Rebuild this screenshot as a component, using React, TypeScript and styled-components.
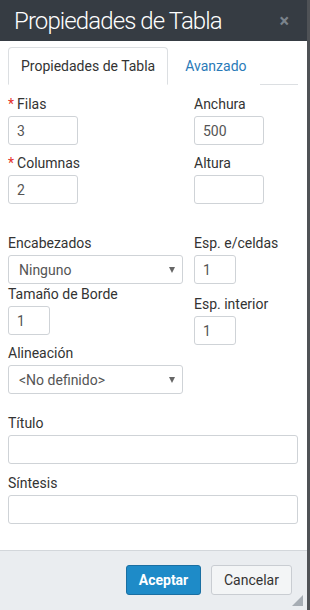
import React from 'react';
import styled, { createGlobalStyle } from 'styled-components';

const GlobalStyle = createGlobalStyle`
  html, body {
    margin: 0;
    padding: 0;
    background: #4f5256;
    font-family: Roboto, "Liberation Sans", Arial, sans-serif;
  }
  * {
    box-sizing: border-box;
  }
`;

const Dialog = styled.div`
  width: 307px;
  height: 610px;
  background: #fff;
  display: flex;
  flex-direction: column;
  position: relative;
`;

const Header = styled.div`
  height: 41px;
  background: #363c43;
  color: #fff;
  display: flex;
  align-items: center;
  justify-content: space-between;
  padding: 0 14px;
`;

const Title = styled.h1`
  margin: 0;
  font-size: 24px;
  font-weight: 300;
  letter-spacing: -0.9px;
  white-space: nowrap;
`;

const Close = styled.span`
  color: #7b838c;
  font-size: 18px;
  font-weight: 700;
  line-height: 1;
  margin-right: 4px;
`;

const Body = styled.div`
  flex: 1;
  padding: 6px 9px 0 8px;
`;

const Tabs = styled.div`
  display: flex;
  border-bottom: 1px solid #dcdfe2;
  height: 38px;
`;

const Tab = styled.div<{ $active?: boolean }>`
  display: flex;
  align-items: center;
  height: 38px;
  white-space: nowrap;
  font-size: 14px;
  color: ${p => (p.$active ? '#333' : '#2a7ab8')};
  background: #fff;
  border: 1px solid ${p => (p.$active ? '#dcdfe2' : 'transparent')};
  border-bottom-color: ${p => (p.$active ? '#fff' : 'transparent')};
  border-radius: 4px 4px 0 0;
  margin-bottom: -1px;
  padding: ${p => (p.$active ? '0 12px 0 12px' : '0 12px 0 16px')};
`;

const Row = styled.div<{ $mt: number }>`
  display: flex;
  margin-top: ${p => p.$mt}px;
`;

const Column = styled.div<{ $width?: number }>`
  display: flex;
  flex-direction: column;
  width: ${p => (p.$width ? `${p.$width}px` : 'auto')};
  flex: ${p => (p.$width ? 'none' : '1')};
`;

const Field = styled.div<{ $mt?: number }>`
  display: flex;
  flex-direction: column;
  margin-top: ${p => p.$mt || 0}px;
`;

const Label = styled.label`
  font-size: 14px;
  line-height: 18px;
  color: #333;
  margin-bottom: 3px;
`;

const Req = styled.span`
  color: #e5302a;
  margin-right: 3px;
`;

const Input = styled.div<{ $width: number; $height?: number }>`
  width: ${p => p.$width}px;
  height: ${p => p.$height || 29}px;
  border: 1px solid #cfd3d7;
  border-radius: 3px;
  font-size: 14px;
  color: #555;
  display: flex;
  align-items: center;
  padding-left: 8px;
`;

const Select = styled(Input)`
  justify-content: space-between;
  padding: 0 7px 0 10px;
`;

const Arrow = styled.span`
  width: 0;
  height: 0;
  border-left: 3.5px solid transparent;
  border-right: 3.5px solid transparent;
  border-top: 6px solid #666;
`;

const Footer = styled.div`
  height: 60px;
  background: #eaedf0;
  border-top: 1px solid #d3d7db;
  display: flex;
  justify-content: flex-end;
  align-items: flex-start;
  padding: 14px 15px 0 0;
  gap: 10px;
`;

const Button = styled.button<{ $primary?: boolean }>`
  height: 30px;
  border-radius: 3px;
  font-family: Roboto, "Liberation Sans", Arial, sans-serif;
  font-size: 14px;
  font-weight: ${p => (p.$primary ? 700 : 400)};
  color: ${p => (p.$primary ? '#fff' : '#333')};
  background: ${p => (p.$primary ? '#1e8bc8' : '#f3f5f6')};
  border: 1px solid ${p => (p.$primary ? '#1a6fa2' : '#c9cdd2')};
  padding: 0;
  width: ${p => (p.$primary ? '75px' : '81px')};
`;

const Grip = styled.div`
  position: absolute;
  right: 4px;
  bottom: 4px;
  width: 0;
  height: 0;
  border-left: 11px solid transparent;
  border-bottom: 11px solid #a6adb4;
`;

export default function App() {
  return (
    <>
      <GlobalStyle />
      <Dialog>
        <Header>
          <Title>Propiedades de Tabla</Title>
          <Close>×</Close>
        </Header>
        <Body>
          <Tabs>
            <Tab $active>Propiedades de Tabla</Tab>
            <Tab>Avanzado</Tab>
          </Tabs>
          <Row $mt={10}>
            <Column $width={186}>
              <Field>
                <Label><Req>*</Req>Filas</Label>
                <Input $width={70}>3</Input>
              </Field>
              <Field $mt={9}>
                <Label><Req>*</Req>Columnas</Label>
                <Input $width={70}>2</Input>
              </Field>
            </Column>
            <Column>
              <Field>
                <Label>Anchura</Label>
                <Input $width={70}>500</Input>
              </Field>
              <Field $mt={9}>
                <Label>Altura</Label>
                <Input $width={70} />
              </Field>
            </Column>
          </Row>
          <Row $mt={30}>
            <Column $width={186}>
              <Field>
                <Label>Encabezados</Label>
                <Select $width={175}>
                  Ninguno
                  <Arrow />
                </Select>
              </Field>
              <Field $mt={1}>
                <Label>Tamaño de Borde</Label>
                <Input $width={42}>1</Input>
              </Field>
              <Field $mt={9}>
                <Label>Alineación</Label>
                <Select $width={175}>
                  &lt;No definido&gt;
                  <Arrow />
                </Select>
              </Field>
            </Column>
            <Column>
              <Field>
                <Label>Esp. e/celdas</Label>
                <Input $width={42}>1</Input>
              </Field>
              <Field $mt={11}>
                <Label>Esp. interior</Label>
                <Input $width={42}>1</Input>
              </Field>
            </Column>
          </Row>
          <Field $mt={20}>
            <Label>Título</Label>
            <Input $width={290} />
          </Field>
          <Field $mt={10}>
            <Label>Síntesis</Label>
            <Input $width={290} />
          </Field>
        </Body>
        <Footer>
          <Button $primary>Aceptar</Button>
          <Button>Cancelar</Button>
        </Footer>
        <Grip />
      </Dialog>
    </>
  );
}
